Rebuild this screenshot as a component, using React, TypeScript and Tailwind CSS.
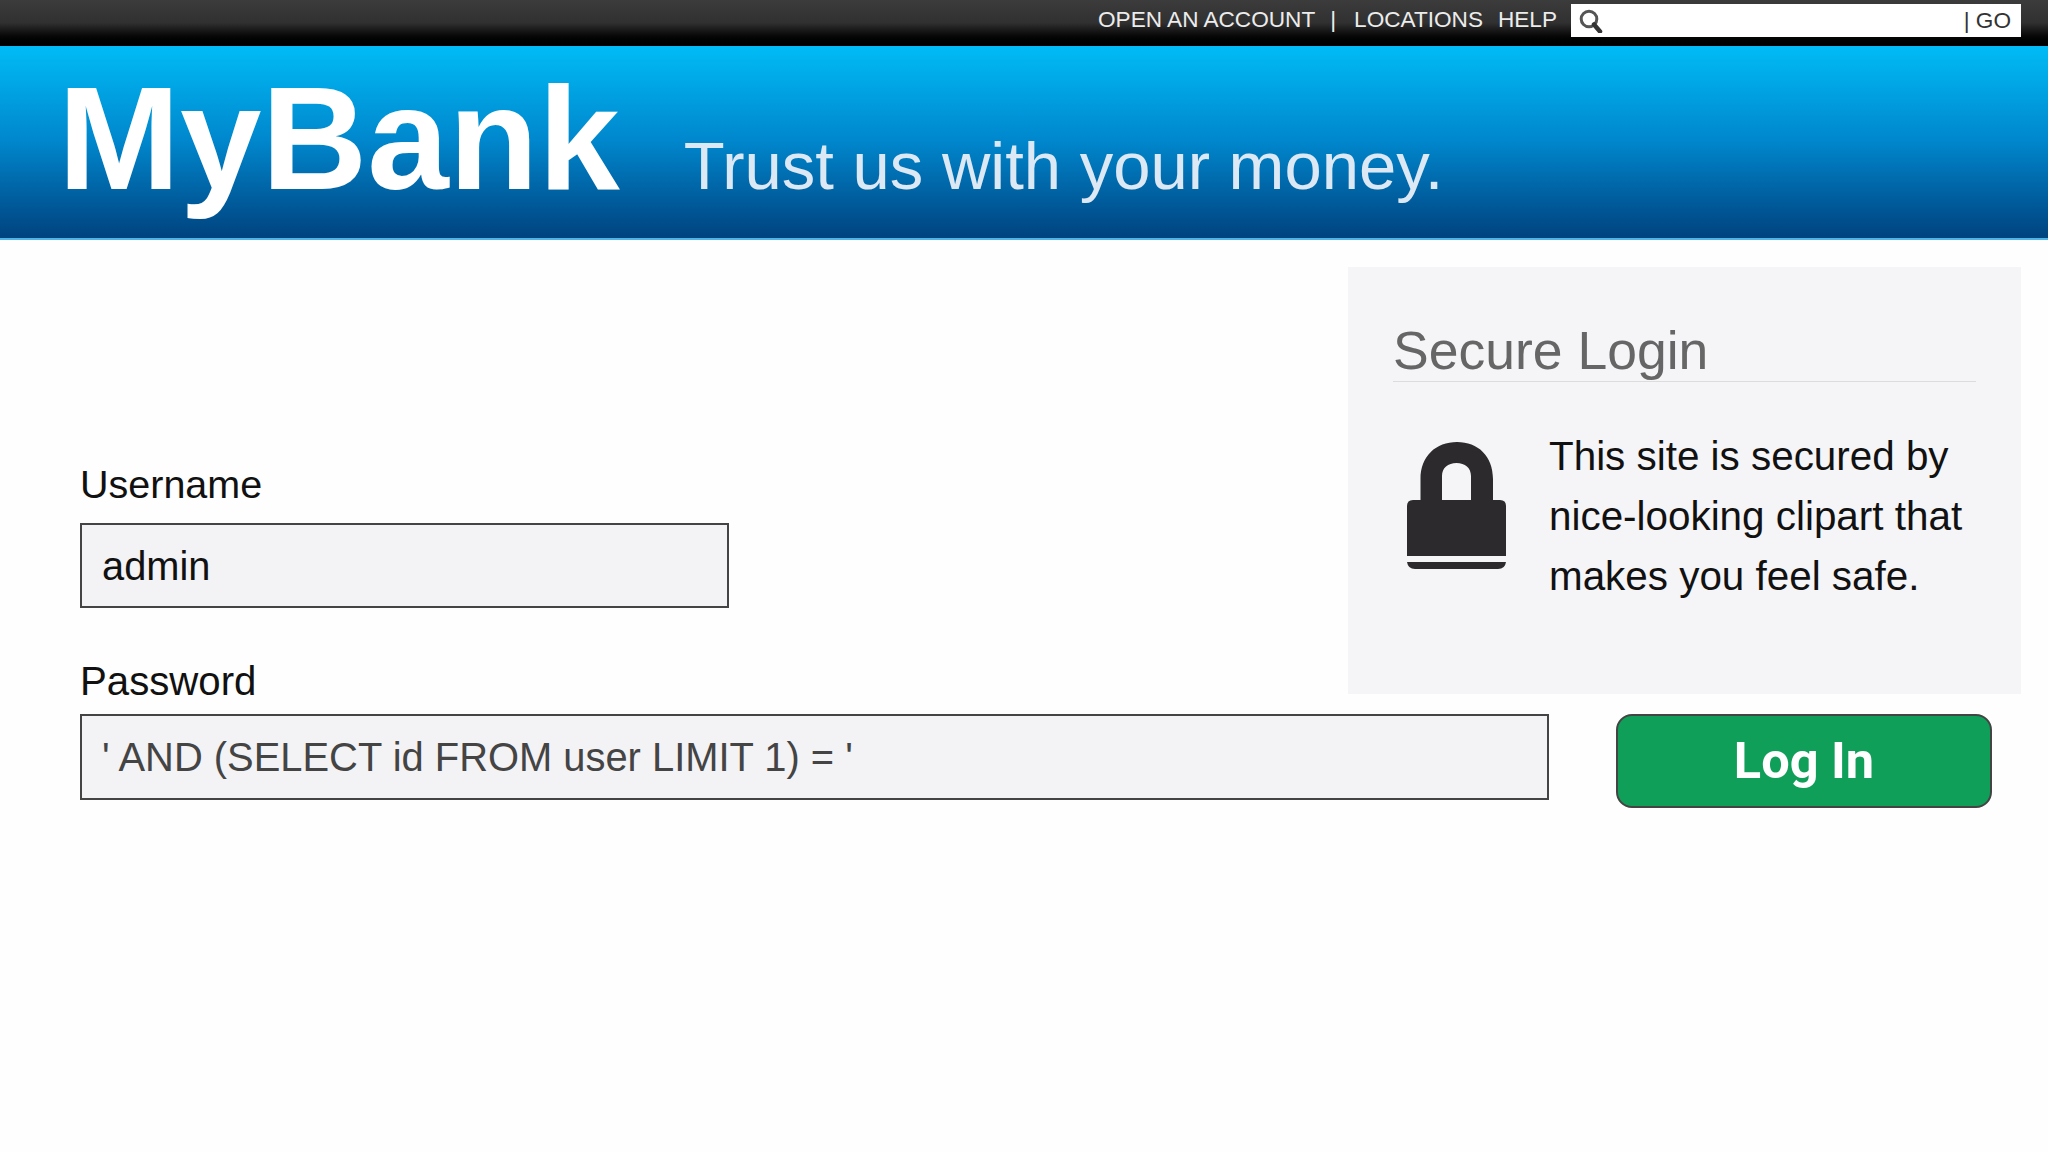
import React from 'react';

const sans = "font-['Liberation_Sans',Arial,sans-serif]";

function SearchIcon() {
  return (
    <svg width="24" height="24" viewBox="0 0 24 24" className="shrink-0">
      <circle cx="10" cy="10" r="7.8" fill="none" stroke="#555" strokeWidth="3" />
      <path d="M15 15.5 L21 22.5" stroke="#333" strokeWidth="4.5" strokeLinecap="round" />
    </svg>
  );
}

function LockIcon() {
  return (
    <svg width="99" height="127" viewBox="0 0 99 127" className="mt-4 ml-[14px] shrink-0">
      <path
        fillRule="evenodd"
        fill="#2c2a2d"
        d="M13.5 60 V37 C13.5 14 29 0 50 0 C71 0 86 14 86 37 V60 H64 V34 C64 26 58 21 49.5 21 C41 21 35 26 35 34 V60 Z"
      />
      <path fill="#2c2a2d" d="M6 58 H93 Q99 58 99 64 V114 H0 V64 Q0 58 6 58 Z" />
      <path fill="#2c2a2d" d="M0 120 H99 Q98 127 91 127 H8 Q1 127 0 120 Z" />
    </svg>
  );
}

function TopBar() {
  return (
    <div className={`${sans} flex h-[46px] items-start justify-end bg-gradient-to-b from-[#3c3c3c] via-[#303030] to-[#000000] pt-1 pr-[27px] text-[22.6px] leading-[31px] text-[#ececec]`}>
      <span>OPEN AN ACCOUNT</span>
      <span className="ml-[15px] font-light">|</span>
      <span className="ml-[18px]">LOCATIONS</span>
      <span className="ml-[15px]">HELP</span>
      <div className="ml-[14px] flex h-[33px] w-[450px] items-center justify-between bg-white pl-2 pr-[10px] text-[#333]">
        <SearchIcon />
        <span>| GO</span>
      </div>
    </div>
  );
}

function Banner() {
  return (
    <div className={`${sans} flex h-[194px] items-baseline border-b-2 border-[#4fb4e6] bg-gradient-to-b from-[#00bcf6] via-[#0086cc] to-[#00437f] pl-[58px]`}>
      <span className="text-[146.5px] leading-[184px] font-bold text-white">MyBank</span>
      <span className="ml-[64px] text-[67px] text-[#dce9f4]">Trust us with your money.</span>
    </div>
  );
}

function SecurePanel() {
  return (
    <div className={`${sans} h-[427px] w-[673px] shrink-0 bg-[#f5f4f7] pt-[54px] pr-[45px] pl-[45px]`}>
      <h2 className="border-b border-[#dcdcdc] text-[53.5px] leading-[60px] text-[#666666]">Secure Login</h2>
      <div className="mt-[44px] flex items-start gap-[43px]">
        <LockIcon />
        <p className="text-[40.4px] leading-[60px] text-[#111111]">
          This site is secured by
          <br />
          nice-looking clipart that
          <br />
          makes you feel safe.
        </p>
      </div>
    </div>
  );
}

export default function App() {
  return (
    <div className="min-h-screen bg-[#fefefe]">
      <TopBar />
      <Banner />
      <main className={`${sans} pr-[27px] pl-[80px]`}>
        <div className="mt-[27px] flex items-end justify-between">
          <div className="flex flex-col">
            <label className="mb-4 text-[39.5px] leading-[46px] text-[#111111]">Username</label>
            <input
              readOnly
              value="admin"
              className="mb-[60px] h-[85px] w-[649px] border-2 border-[#444444] bg-[#f3f2f5] px-[20px] pt-[2px] text-[39.8px] text-[#111111] outline-none"
            />
            <label className="h-[26px] text-[40.2px] leading-[28px] text-[#111111]">Password</label>
          </div>
          <SecurePanel />
        </div>
        <div className="mt-[20px] flex items-start">
          <input
            readOnly
            value="' AND (SELECT id FROM user LIMIT 1) = '"
            className="h-[86px] w-[1469px] border-2 border-[#444444] bg-[#f3f2f5] px-[20px] pt-[1px] text-[39.9px] text-[#444444] outline-none"
          />
          <button className="ml-[67px] h-[94px] w-[376px] rounded-[16px] border-2 border-[#444444] bg-[#0f9f59] font-['Roboto',sans-serif] text-[50.5px] font-bold text-white">
            Log In
          </button>
        </div>
      </main>
    </div>
  );
}
